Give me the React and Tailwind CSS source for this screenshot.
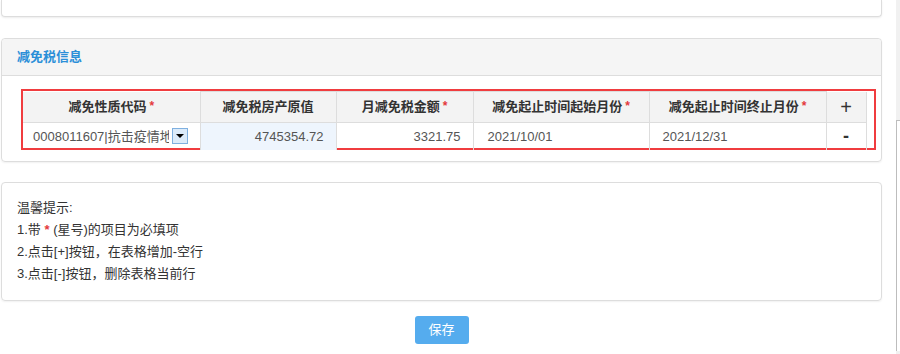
import React from "react";

const F = { fontFamily: '"Liberation Sans", Arial, "Noto Sans CJK SC", sans-serif' };

function Star() {
  return <span className="text-[#e4393c] text-[12px] ml-[3px] align-top">*</span>;
}

function Th({ children, className = "" }) {
  return (
    <th className={"border border-[#dddddd] bg-[#f3f3f3] h-[29px] p-0 text-[13px] font-bold text-[#333] text-center " + className}>
      {children}
    </th>
  );
}

export default function App() {
  return (
    <div className="w-[900px] h-[354px] bg-white flex overflow-hidden" style={F}>
      <div className="w-[881px] ml-px flex flex-col">
        {/* top card remnant */}
        <div className="h-[17px] border border-t-0 border-[#dddddd] rounded-b-[4px] shadow-[0_1px_2px_rgba(0,0,0,0.08)]" />

        {/* 减免税信息 card */}
        <div className="mt-[21px] border border-[#dddddd] rounded-[4px] shadow-[0_1px_2px_rgba(0,0,0,0.06)]">
          <div className="h-[37px] bg-[#f5f5f5] border-b border-[#dddddd] rounded-t-[4px] flex items-center pl-[15px] text-[13px] font-bold text-[#2b8fd8]">
            减免税信息
          </div>
          <div className="pt-[13px] pb-[11px] pl-[19px]">
            <div className="w-[855px] h-[61px] border-2 border-[#f03c3f]">
              <table className="w-[843px] border-collapse table-fixed">
                <colgroup>
                  <col className="w-[177px]" />
                  <col className="w-[136px]" />
                  <col className="w-[137px]" />
                  <col className="w-[176px]" />
                  <col className="w-[177px]" />
                  <col className="w-[40px]" />
                </colgroup>
                <thead>
                  <tr>
                    <Th className="border-t-0 border-l-0">减免性质代码<Star /></Th>
                    <Th>减免税房产原值</Th>
                    <Th>月减免税金额<Star /></Th>
                    <Th>减免起止时间起始月份<Star /></Th>
                    <Th>减免起止时间终止月份<Star /></Th>
                    <Th className="border-t-0 text-[20px] font-normal text-[#222]">+</Th>
                  </tr>
                </thead>
                <tbody>
                  <tr className="h-[28px] text-[13px] text-[#555]">
                    <td className="border border-[#dddddd] border-l-0 border-b-0 p-0">
                      <div className="flex items-center pl-[10px] pr-[11px]">
                        <span className="whitespace-nowrap overflow-hidden w-[136px]">0008011607|抗击疫情地</span>
                        <span className="ml-[3px] w-[16px] h-[16px] border border-[#7fb0e0] bg-[#dcebfa] flex items-center justify-center">
                          <span className="w-0 h-0 border-l-[4px] border-r-[4px] border-t-[4px] border-l-transparent border-r-transparent border-t-black" />
                        </span>
                      </div>
                    </td>
                    <td className="border border-[#dddddd] border-b-0 p-0 bg-[#eef5fd] text-right pr-[12px]">4745354.72</td>
                    <td className="border border-[#dddddd] border-b-0 p-0 text-right pr-[12px]">3321.75</td>
                    <td className="border border-[#dddddd] border-b-0 p-0 pl-[14px]">2021/10/01</td>
                    <td className="border border-[#dddddd] border-b-0 p-0 pl-[13px]">2021/12/31</td>
                    <td className="border border-[#dddddd] border-b-0 p-0 text-center text-[18px] font-bold text-[#333] leading-none">-</td>
                  </tr>
                </tbody>
              </table>
            </div>
          </div>
        </div>

        {/* hints card */}
        <div className="mt-[20px] h-[119px] border border-[#dddddd] rounded-[4px] pt-[14px] pl-[15px] text-[13px] leading-[22px] text-[#333] shadow-[0_1px_2px_rgba(0,0,0,0.06)]">
          <div>温馨提示:</div>
          <div>1.带 <span className="text-[#e4393c] font-bold">*</span> (星号)的项目为必填项</div>
          <div>2.点击[+]按钮，在表格增加-空行</div>
          <div>3.点击[-]按钮，删除表格当前行</div>
        </div>

        <div className="mt-[15px] flex justify-center">
          <button className="w-[54px] h-[28px] rounded-[3px] bg-[#55acee] text-white text-[13px]">保存</button>
        </div>
      </div>

      {/* scrollbar sliver */}
      <div className="ml-[14px] w-[4px] h-full bg-[#f1f1f1] flex flex-col">
        <div className="h-[120px]" />
        <div className="flex-1 border-l border-t border-[#bdbdbd] bg-white" />
        <div className="h-[3px]" />
      </div>
    </div>
  );
}
